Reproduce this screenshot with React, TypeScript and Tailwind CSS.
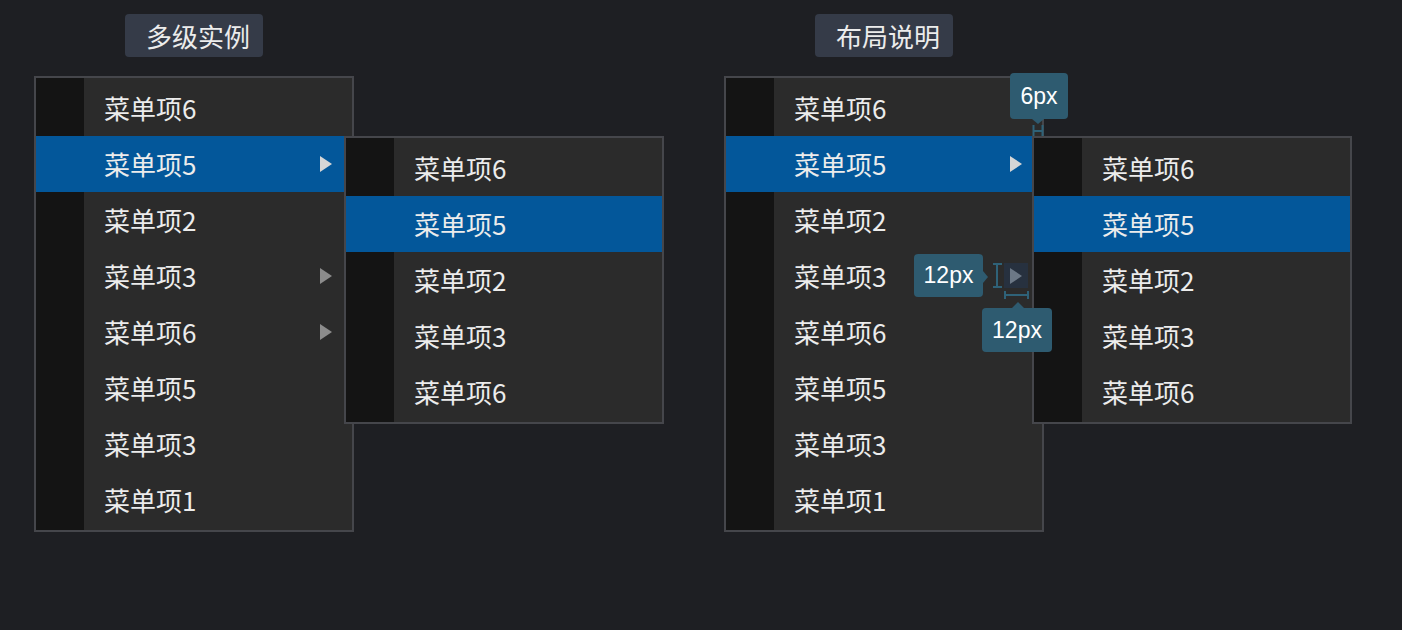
import React from "react";

type Item = { label: string; arrow?: boolean; active?: boolean; marked?: boolean };

const mainItems: Item[] = [
  { label: "菜单项6" },
  { label: "菜单项5", arrow: true, active: true },
  { label: "菜单项2" },
  { label: "菜单项3", arrow: true },
  { label: "菜单项6", arrow: true },
  { label: "菜单项5" },
  { label: "菜单项3" },
  { label: "菜单项1" },
];

const subItems: Item[] = [
  { label: "菜单项6" },
  { label: "菜单项5", active: true },
  { label: "菜单项2" },
  { label: "菜单项3" },
  { label: "菜单项6" },
];

const font = { fontFamily: '"Noto Sans CJK SC", "Noto Sans", sans-serif' };

function Arrow({ color }: { color: string }) {
  return (
    <svg width="12" height="16" viewBox="0 0 12 16" className="relative block">
      <polygon points="0,0 12,8 0,16" fill={color} />
    </svg>
  );
}

function Row({ item }: { item: Item }) {
  return (
    <div
      className={
        "flex h-[56px] items-center justify-between pl-[68px] pr-[20px] " +
        (item.active ? "bg-[#03579a]" : "")
      }
    >
      <span className="text-[26px] leading-none text-[#ececec]">{item.label}</span>
      {item.arrow && (
        <div className="relative">
          {item.marked && <div className="absolute -left-[6px] -top-[5px] h-[25px] w-[24px] bg-[#27313f]" />}
          <Arrow color={item.active ? "#d6d6d6" : item.marked ? "#6c7886" : "#8c8c8c"} />
        </div>
      )}
    </div>
  );
}

function Menu({ items }: { items: Item[] }) {
  return (
    <div className="w-[320px] border-2 border-[#45464b] bg-[linear-gradient(to_right,#141414_48px,#2b2b2b_48px)] py-[2px]">
      {items.map((it, i) => (
        <Row key={i} item={it} />
      ))}
    </div>
  );
}

function Title({ text }: { text: string }) {
  return (
    <div className="flex h-[43px] items-center rounded-[4px] bg-[#353b48] pl-[21px] pr-[13px] text-[26px] leading-none text-[#ececec]">
      {text}
    </div>
  );
}

function Tip({ text, className }: { text: string; className: string }) {
  return (
    <div
      className={
        "absolute flex items-center justify-center rounded-[4px] bg-[#2e5b70] text-[23px] text-white " + className
      }
      style={{ fontFamily: '"Liberation Sans", Arial, sans-serif' }}
    >
      {text}
    </div>
  );
}

function Annotations() {
  return (
    <>
      <Tip text="6px" className="left-[286px] -top-[3px] h-[46px] w-[58px]" />
      <svg className="absolute left-[280px] top-[40px]" width="50" height="24" viewBox="0 0 50 24">
        <polygon points="28,3 40,3 34,8" fill="#2e5b70" />
        <g stroke="#2f6278" strokeWidth="2" fill="none">
          <line x1="29.5" y1="9" x2="29.5" y2="20" />
          <line x1="38.5" y1="9" x2="38.5" y2="20" />
          <line x1="29.5" y1="15" x2="38.5" y2="15" />
        </g>
      </svg>

      <Tip text="12px" className="left-[190px] top-[178px] h-[43px] w-[69px]" />
      <svg className="absolute left-[258px] top-[185px]" width="24" height="30" viewBox="0 0 24 30">
        <polygon points="1,10 6,16 1,22" fill="#2e5b70" />
        <g stroke="#2f6278" strokeWidth="2" fill="none">
          <line x1="15" y1="3" x2="15" y2="26" />
          <line x1="11" y1="3" x2="20" y2="3" />
          <line x1="11" y1="26" x2="20" y2="26" />
        </g>
      </svg>

      <svg className="absolute left-[278px] top-[213px]" width="30" height="20" viewBox="0 0 30 20">
        <g stroke="#2f6278" strokeWidth="2" fill="none">
          <line x1="3" y1="6" x2="26" y2="6" />
          <line x1="3" y1="2" x2="3" y2="10" />
          <line x1="26" y1="2" x2="26" y2="10" />
        </g>
        <polygon points="10,19 16,13 22,19" fill="#2e5b70" />
      </svg>
      <Tip text="12px" className="left-[258px] top-[232px] h-[44px] w-[70px]" />
    </>
  );
}

export default function App() {
  const right: Item[] = mainItems.map((it, i) => (i === 3 ? { ...it, marked: true } : it));
  return (
    <div className="flex h-[630px] w-[1402px] items-start gap-[370px] bg-[#1e1f23] pl-[34px] pt-[14px]" style={font}>
      <div className="flex w-[320px] flex-col items-center gap-[19px]">
        <Title text="多级实例" />
        <div className="relative">
          <Menu items={mainItems} />
          <div className="absolute left-[310px] top-[60px]">
            <Menu items={subItems} />
          </div>
        </div>
      </div>
      <div className="flex w-[320px] flex-col items-center gap-[19px]">
        <Title text="布局说明" />
        <div className="relative">
          <Menu items={right} />
          <div className="absolute left-[308px] top-[60px]">
            <Menu items={subItems} />
          </div>
          <Annotations />
        </div>
      </div>
    </div>
  );
}
